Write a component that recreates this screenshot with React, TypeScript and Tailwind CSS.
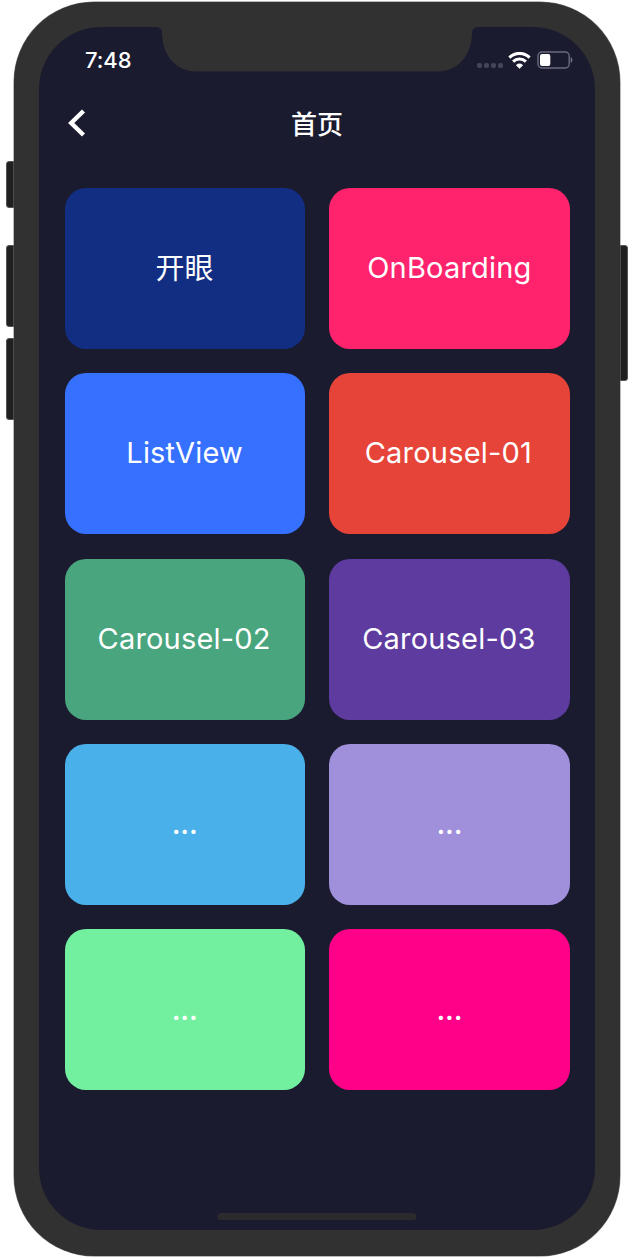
const tiles = [
  { label: "开眼", style: "bg-[#122e82]", text: "text-[29px] tracking-normal" },
  { label: "OnBoarding", style: "bg-[#ff236d]", text: "text-[29px] tracking-[0.2px] pb-[2px]" },
  { label: "ListView", style: "bg-[#3670ff]", text: "text-[29px] tracking-[0.2px] pb-[2px]" },
  { label: "Carousel-01", style: "bg-[#e64438]", text: "text-[29px] tracking-[0.2px] pb-[2px] pr-[2px]" },
  { label: "Carousel-02", style: "bg-[#48a57e]", text: "text-[29px] tracking-[0.2px] pb-[2px] pr-px" },
  { label: "Carousel-03", style: "bg-[#5d3b9f]", text: "text-[29px] tracking-[0.2px] pb-[2px] pr-px" },
  { label: "···", style: "bg-[#4ab0e9]", text: "text-[29px] font-medium tracking-[-0.2px] pt-[15px]" },
  { label: "···", style: "bg-[#a08fda]", text: "text-[29px] font-medium tracking-[-0.2px] pt-[15px]" },
  { label: "···", style: "bg-[#72f0a0]", text: "text-[29px] font-medium tracking-[-0.2px] pt-[15px]" },
  { label: "···", style: "bg-[#ff0088]", text: "text-[29px] font-medium tracking-[-0.2px] pt-[15px]" },
];

function StatusBar() {
  return (
    <div className="flex h-[44px] items-end justify-between pr-[22px] pl-[46px]">
      <span className="text-[22px] leading-[22px] font-medium tracking-[-0.1px]">7:48</span>
      <div className="flex h-[22px] items-center">
        <div className="mt-[10px] mr-[5px] flex gap-[2px]">
          <i className="size-[5px] rounded-[2px] bg-[#45455a]" />
          <i className="size-[5px] rounded-[2px] bg-[#45455a]" />
          <i className="size-[5px] rounded-[2px] bg-[#45455a]" />
          <i className="size-[5px] rounded-[2px] bg-[#45455a]" />
        </div>
        <svg width="23" height="17" viewBox="0 0 23 17" fill="none" stroke="white" strokeWidth="3" className="mr-[6px]">
          <path d="M1.4 5.6a14.2 14.2 0 0 1 20.2 0" />
          <path d="M5.1 9.7a9.2 9.2 0 0 1 12.8 0" />
          <path d="M11.5 16.6 8.2 13.2a4.7 4.7 0 0 1 6.6 0Z" fill="white" stroke="white" strokeWidth="0.5" />
        </svg>
        <svg width="36" height="18" viewBox="0 0 36 18" fill="none">
          <rect x="1" y="1" width="31.2" height="16" rx="4" stroke="#6c6c80" strokeWidth="1.4" />
          <rect x="3" y="3" width="10.3" height="12" rx="2" fill="white" />
          <path d="M33.7 6.2c2.2.8 2.2 4.8 0 5.6Z" fill="#77778a" />
        </svg>
      </div>
    </div>
  );
}

export default function App() {
  return (
    <div className="relative h-[1258px] w-[634px] overflow-hidden bg-white pt-[2px] pl-[14px] font-['Inter','Noto_Sans_CJK_SC',sans-serif] text-white">
      <i className="absolute top-[161px] left-[6px] h-[47px] w-[12px] rounded-[3px] border border-[#555] bg-[#202020]" />
      <i className="absolute top-[245px] left-[6px] h-[82px] w-[12px] rounded-[3px] border border-[#555] bg-[#202020]" />
      <i className="absolute top-[338px] left-[6px] h-[82px] w-[12px] rounded-[3px] border border-[#555] bg-[#202020]" />
      <i className="absolute top-[245px] left-[615px] h-[136px] w-[13px] rounded-[3px] border border-[#555] bg-[#202020]" />
      <div className="relative h-[1254px] w-[606px] rounded-[80px] bg-[#313131] p-[25px] pb-[26px] shadow-[0_0_0_0.5px_#777]">
        <div className="relative flex h-full flex-col overflow-hidden rounded-[62px] bg-[#1b1b2f]">
          <svg className="absolute top-0 left-[117px]" width="322" height="45" viewBox="0 0 322 45">
            <path d="M0 0C4 0 6 2 6 7C7 29 20 44.5 41 44.5H281C302 44.5 315 29 316 7C316 2 318 0 322 0Z" fill="#313131" />
          </svg>
          <StatusBar />
          <header className="grid h-[106px] grid-cols-[1fr_auto_1fr] items-center px-[29px] pt-px">
            <svg className="mb-[3px]" width="19" height="28" viewBox="0 0 19 28" fill="none" stroke="white" strokeWidth="4.4">
              <path d="M15.5 2 3.2 14l12.3 12" />
            </svg>
            <h1 className="pt-px text-[26px] leading-none font-medium">首页</h1>
            <span />
          </header>
          <main className="grid grid-cols-2 gap-x-[24.5px] gap-y-[24.3px] px-[25.5px] pt-[11px]">
            {tiles.map((tile, index) => (
              <div key={index} className={`flex h-[161px] items-center justify-center rounded-[21px] ${tile.style}`}>
                <span className={`leading-none ${tile.text}`}>{tile.label}</span>
              </div>
            ))}
          </main>
          <div className="mx-auto mt-auto mb-[10px] h-[7px] w-[199px] -translate-x-[0.5px] rounded-full bg-[#2b2b2d]" />
        </div>
      </div>
    </div>
  );
}
